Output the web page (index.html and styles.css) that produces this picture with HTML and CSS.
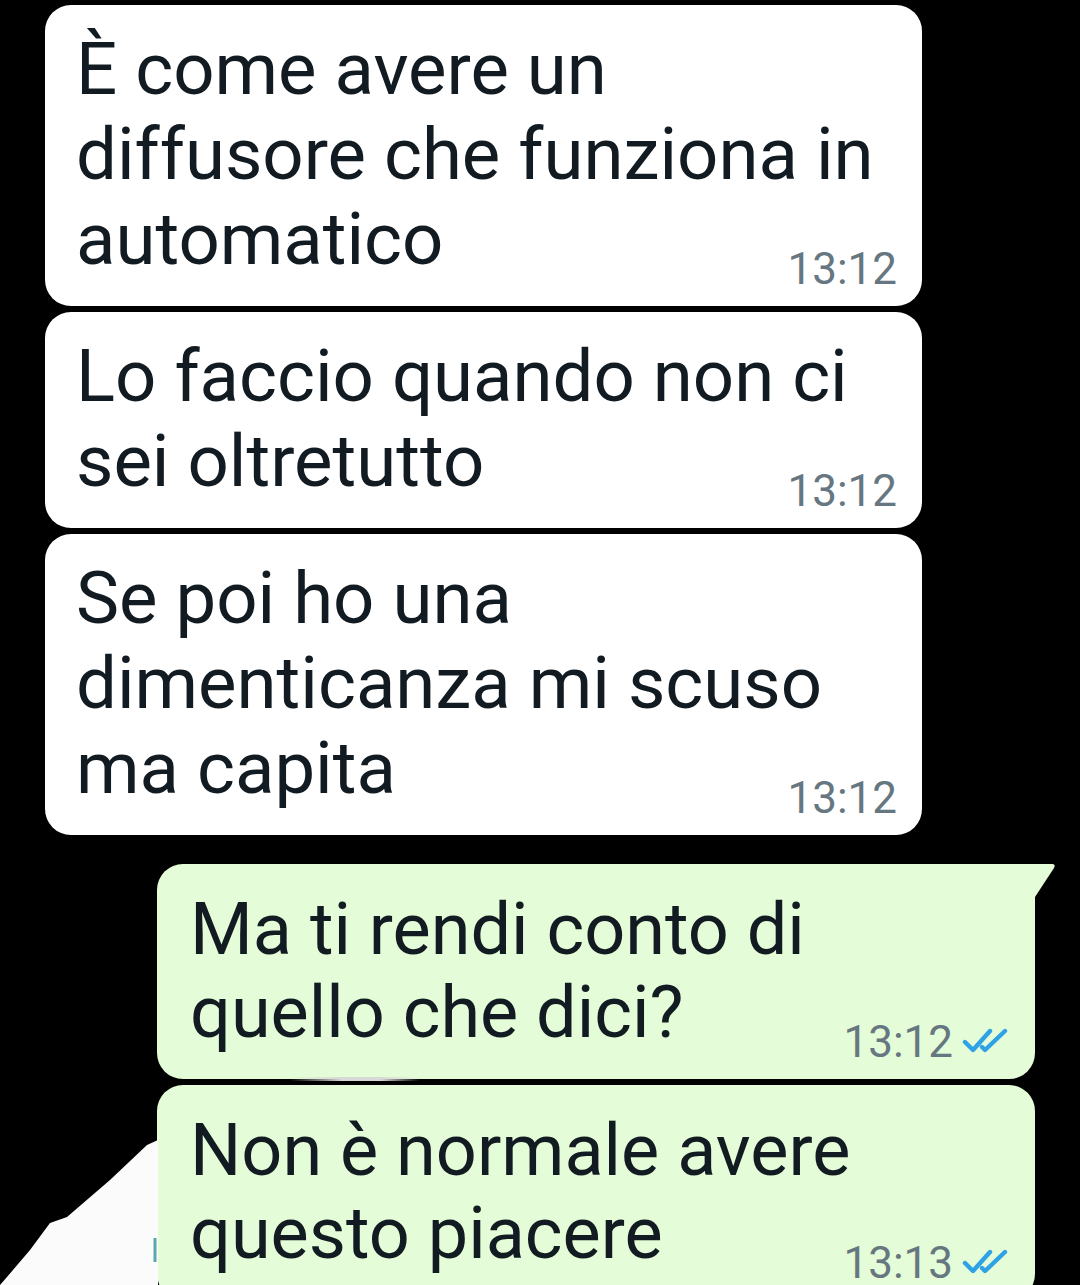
FILE: index.html
```html
<!DOCTYPE html>
<html lang="it">
<head>
<meta charset="utf-8">
<title>Chat</title>
<link rel="stylesheet" href="styles.css">
</head>
<body>
<div class="chat">
  <div class="msg in">
    <div class="text">È come avere un diffusore che funziona in automatico</div>
    <div class="meta"><span class="time">13:12</span></div>
  </div>
  <div class="msg in">
    <div class="text">Lo faccio quando non ci sei oltretutto</div>
    <div class="meta"><span class="time">13:12</span></div>
  </div>
  <div class="msg in">
    <div class="text">Se poi ho una dimenticanza mi scuso ma capita</div>
    <div class="meta"><span class="time">13:12</span></div>
  </div>
  <div class="msg out first">
    <svg class="tail" width="22" height="34" viewBox="0 0 22 34"><path d="M0 0 H17 Q21 0 19 4 L0 33 Z" fill="#e4fcd7"/></svg>
    <div class="text">Ma ti rendi conto di quello che dici?</div>
    <div class="meta"><span class="time">13:12</span>
      <svg class="ticks" width="48" height="26" viewBox="0 0 48 26"><path d="M3 14 L11 22 L28 3 M20 19 L23 22 L43 3" fill="none" stroke="#2fa2e6" stroke-width="4.4" stroke-linecap="round" stroke-linejoin="round"/></svg>
    </div>
  </div>
  <div class="msg out">
    <div class="text">Non è normale avere questo piacere</div>
    <div class="meta"><span class="time">13:13</span>
      <svg class="ticks" width="48" height="26" viewBox="0 0 48 26"><path d="M3 14 L11 22 L28 3 M20 19 L23 22 L43 3" fill="none" stroke="#2fa2e6" stroke-width="4.4" stroke-linecap="round" stroke-linejoin="round"/></svg>
    </div>
  </div>
</div>
<svg class="scrap" width="160" height="210" viewBox="0 1075 160 210">
  <path d="M158 1140 L147 1145 L110 1180 L67 1217 L50 1223 L30 1250 L7 1277 L0 1285 L158 1285 Z" fill="#fbfbfb"/>
  <path d="M155 1238 L155 1262" stroke="#5aa6ad" stroke-width="3"/>
</svg>
<div class="smear"></div>
</body>
</html>
```

FILE: styles.css
```css
html, body {
  margin: 0;
  padding: 0;
}
body {
  width: 1080px;
  height: 1285px;
  overflow: hidden;
  background: #000;
  font-family: Roboto, "Noto Sans", "Liberation Sans", sans-serif;
  color: #111b21;
  position: relative;
}
.chat {
  display: flex;
  flex-direction: column;
  padding-top: 5px;
}
.msg {
  position: relative;
  box-sizing: border-box;
  border-radius: 26px;
}
.msg.in {
  background: #ffffff;
  margin-left: 45px;
  width: 877px;
  padding: 22px 25px 12px 31px;
  margin-bottom: 6px;
}
.msg.in:nth-child(3) {
  margin-bottom: 29px;
}
.msg.in .text {
  font-size: 72.5px;
  line-height: 85px;
}
.msg.out {
  background: #e4fcd7;
  margin-left: 157px;
  width: 878px;
  padding: 24px 25px 12px 33px;
  margin-bottom: 6px;
}
.msg.out.first {
  border-top-right-radius: 0;
}
.msg.out .text {
  font-size: 72px;
  line-height: 83px;
}
.tail {
  position: absolute;
  top: 0;
  left: 100%;
  display: block;
}
.meta {
  display: flex;
  justify-content: flex-end;
  align-items: center;
  gap: 9px;
  height: 50px;
  margin-top: -38px;
}
.msg.out .meta {
  margin-top: -37px;
}
.time {
  font-size: 44px;
  line-height: 50px;
  color: #667781;
}
.ticks {
  display: block;
  margin-top: -2px;
}
.scrap {
  position: absolute;
  left: 0;
  top: 1075px;
}
.smear {
  position: absolute;
  left: 290px;
  top: 1077px;
  width: 130px;
  height: 4px;
  background: linear-gradient(90deg, rgba(200,200,200,0), #d8d8d8 40%, #d8d8d8 70%, rgba(200,200,200,0));
}
```
